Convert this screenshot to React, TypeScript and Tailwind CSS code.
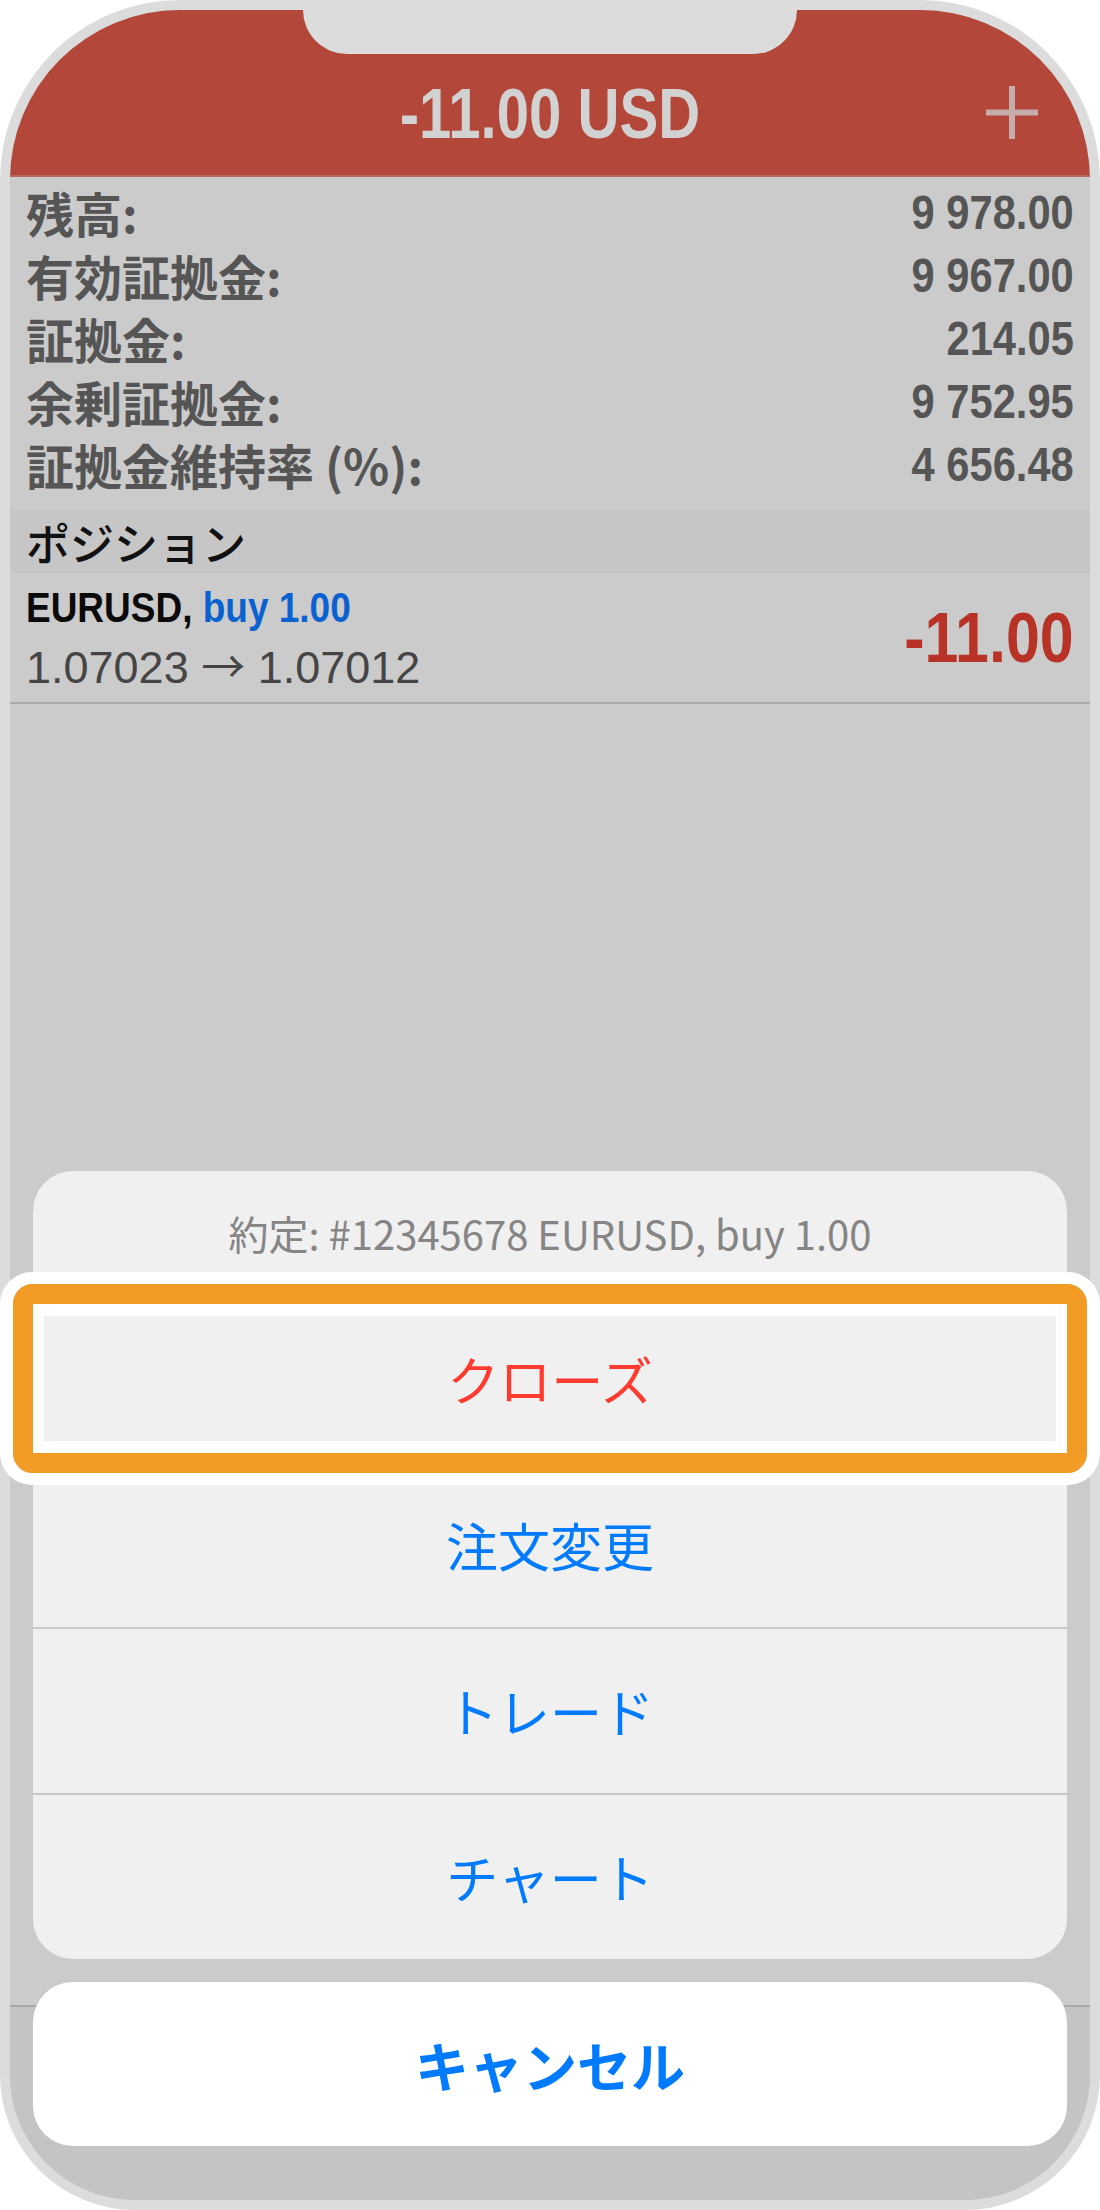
import React from "react";

const balance = [
  { label: "残高:", value: "9 978.00" },
  { label: "有効証拠金:", value: "9 967.00" },
  { label: "証拠金:", value: "214.05" },
  { label: "余剰証拠金:", value: "9 752.95" },
  { label: "証拠金維持率 (%):", value: "4 656.48" },
];

const actions = [
  { label: "クローズ", color: "text-[#ff3b30]" },
  { label: "注文変更", color: "text-[#007aff]" },
  { label: "トレード", color: "text-[#007aff]" },
  { label: "チャート", color: "text-[#007aff]" },
];

// Liberation Sans squeezed horizontally stands in for the condensed iOS face
const sans = "font-['Liberation_Sans','Noto_Sans_CJK_JP',sans-serif]";
const jp = "font-['Noto_Sans_CJK_JP',sans-serif]";

const App: React.FC = () => {
  return (
    <div className="relative h-[2210px] w-[1100px] bg-white">
      {/* Phone frame */}
      <div className="h-full rounded-t-[180px] rounded-b-[135px] bg-[#dcdcdc] p-[10px]">
        <div className="relative flex h-full flex-col overflow-hidden rounded-t-[170px] rounded-b-[125px] bg-[#cbcbcb]">
          {/* Notch */}
          <div className="absolute left-[293px] top-0 z-10 h-[44px] w-[494px] rounded-b-[44px] bg-[#dcdcdc]" />

          {/* Header */}
          <div className="relative h-[167px] shrink-0 border-b-2 border-[#b8675f] bg-[#b2473a] pt-[69px] text-center">
            <span
              className={`${sans} inline-block origin-center scale-x-[0.83] text-[70px] font-bold leading-none text-[#d2d2d2]`}
            >
              -11.00 USD
            </span>
            <svg
              className="absolute right-[52px] top-[76px]"
              width="52"
              height="53"
              viewBox="0 0 52 53"
            >
              <path d="M26 0v53M0 26.5h52" stroke="#c6acaa" strokeWidth="6" />
            </svg>
          </div>

          {/* Account summary */}
          <div className="shrink-0 px-[16px] pt-[3px] pb-[16px]">
            {balance.map((row) => (
              <div key={row.label} className="flex h-[63px] items-center justify-between">
                <span className={`${jp} text-[48px] font-bold leading-[56px] text-[#555555]`}>
                  {row.label}
                </span>
                <span
                  className={`${sans} inline-block origin-right scale-x-[0.85] text-[49px] font-bold leading-[56px] text-[#555555]`}
                >
                  {row.value}
                </span>
              </div>
            ))}
          </div>

          {/* Positions */}
          <div className="flex h-[62px] shrink-0 items-center bg-[#c6c6c6] px-[16px]">
            <span className={`${jp} text-[44px] font-medium leading-none text-[#111111]`}>
              ポジション
            </span>
          </div>
          <div className="flex h-[131px] shrink-0 items-center justify-between border-b-2 border-[#aaaaaa] px-[16px]">
            <div className="flex flex-col">
              <div
                className={`${sans} inline-block origin-left scale-x-[0.86] text-[43px] font-bold leading-[60px]`}
              >
                <span className="text-[#0a0a0a]">EURUSD, </span>
                <span className="text-[#0a62d0]">buy 1.00</span>
              </div>
              <div className={`${sans} text-[45px] leading-[62px] text-[#454545]`}>
                1.07023{" "}
                <span className={`${jp} text-[44px] leading-none`}>→</span>{" "}
                1.07012
              </div>
            </div>
            <span
              className={`${sans} inline-block origin-right scale-x-[0.87] text-[70px] font-bold leading-none text-[#b83225]`}
            >
              -11.00
            </span>
          </div>

          <div className="flex-1" />

          {/* Tab bar (dimmed, under the sheet) */}
          <div className="h-[195px] shrink-0 border-t-2 border-[#a9a9a9] bg-[#c4c4c4]" />

          {/* Action sheet */}
          <div className="absolute bottom-[54px] left-[23px] right-[23px] flex flex-col gap-[23px]">
            <div className="overflow-hidden rounded-[40px] bg-[#f0f0f0]">
              <div className={`${jp} flex h-[124px] items-center justify-center text-[40px] text-[#858585]`}>
                約定: #12345678 EURUSD, buy 1.00
              </div>
              {actions.map((a) => (
                <div
                  key={a.label}
                  className={`${jp} ${a.color} flex h-[166px] items-center justify-center border-t-2 border-[#c8c8c8] text-[52px]`}
                >
                  {a.label}
                </div>
              ))}
            </div>
            <div
              className={`${jp} flex h-[164px] items-center justify-center rounded-[40px] bg-white text-[54px] font-bold text-[#007aff]`}
            >
              キャンセル
            </div>
          </div>
        </div>
      </div>

      {/* Highlight around the close button */}
      <div className="absolute left-0 top-[1272px] h-[213px] w-[1100px] rounded-[32px] border-x-[13px] border-y-[12px] border-white">
        <div className="h-full rounded-[20px] border-[20px] border-[#f39c25]">
          <div className="h-full border-x-[11px] border-y-[12px] border-white" />
        </div>
      </div>
    </div>
  );
};

export default App;
